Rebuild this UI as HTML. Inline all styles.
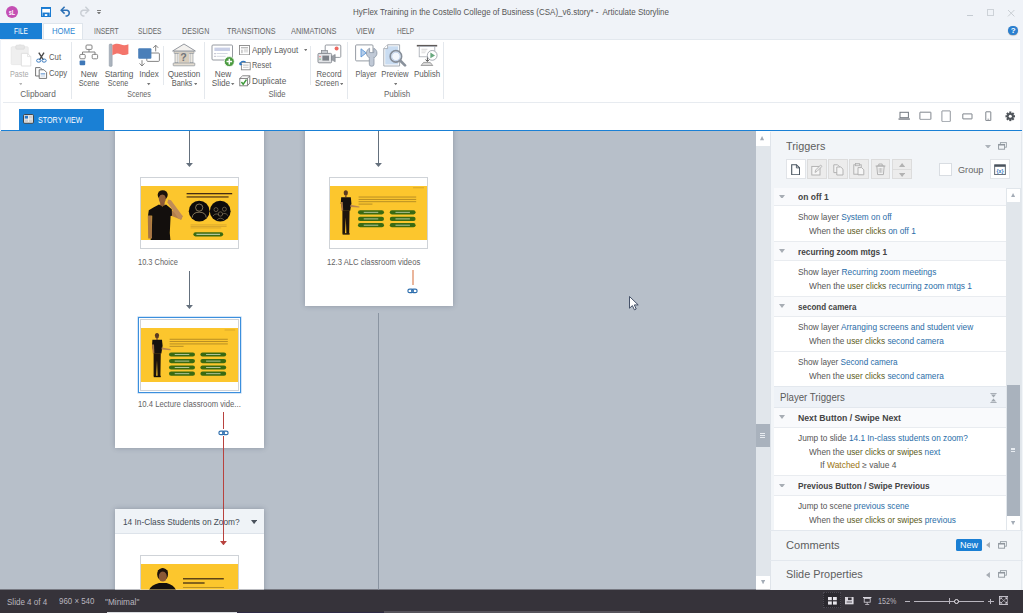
<!DOCTYPE html>
<html>
<head>
<meta charset="utf-8">
<title>Articulate Storyline</title>
<style>
*{margin:0;padding:0;box-sizing:border-box;}
html,body{width:1023px;height:613px;overflow:hidden;background:#36333a;}
body{font-family:"Liberation Sans",sans-serif;font-size:9px;color:#555;position:relative;}
.a{position:absolute;}
.t{position:absolute;white-space:nowrap;line-height:1;}
.t a{color:#2a6da8;}
.t u{text-decoration:none;color:#5b5a20;}
.t s{text-decoration:none;color:#9a7410;}
</style>
</head>
<body>
<!-- TITLE BAR + TABS -->
<div class="a" style="left:0px;top:0px;width:1023px;height:132px;background:#f0f3f8;"></div>
<div class="a" style="left:6px;top:6px;width:12px;height:12px;background:#c44fb4;border-radius:50%;"></div>
<div class="t" style="left:12.00px;top:8.50px;font-size:7.20px;color:#fff;font-weight:bold;transform:translateX(-50%) scaleX(0.7628);">sL</div>
<svg class="a" style="left:41px;top:7px" width="10.2" height="10.2" viewBox="0 0 11 11"><rect x="0.65" y="0.65" width="9.7" height="9.7" fill="#fff" stroke="#1a7bd2" stroke-width="1.3"/><rect x="0.6" y="0.3" width="9.8" height="1.8" fill="#1a7bd2"/><rect x="1.6" y="6" width="7.8" height="4.4" fill="#1a7bd2"/><rect x="4.1" y="7.7" width="2.7" height="2" fill="#fff"/></svg>
<svg class="a" style="left:59.6px;top:6.2px" width="12" height="11" viewBox="0 0 12 11"><path d="M2 4.2 H7 A3 3 0 0 1 7 10 H5.5" fill="none" stroke="#2a6fb5" stroke-width="1.5"/><path d="M4.6 0.8 L1.2 4.2 L4.6 7.6" fill="none" stroke="#2a6fb5" stroke-width="1.5"/></svg>
<svg class="a" style="left:78px;top:6px" width="12" height="11" viewBox="0 0 12 11"><path d="M10 4.2 H5 A3 3 0 0 0 5 10 H6.5" fill="none" stroke="#c9ced4" stroke-width="1.4"/><path d="M7.4 0.8 L10.8 4.2 L7.4 7.6" fill="none" stroke="#c9ced4" stroke-width="1.4"/></svg>
<div class="a" style="left:96.9px;top:10.1px;width:4.4px;height:0.9px;background:#808080;"></div>
<svg class="a" style="left:97.145px;top:11.835px" width="3.91" height="2.53"><polygon points="0,0 3.91,0 1.955,2.53" fill="#777"/></svg>
<div class="t" style="left:353.00px;top:7.80px;font-size:8.40px;color:#565656;transform:scaleX(0.9535);transform-origin:0 50%;">HyFlex Training in the Costello College of Business (CSA)_v6.story* -&nbsp; Articulate Storyline</div>
<div class="a" style="left:966.5px;top:15.2px;width:6.5px;height:1px;background:#c5cbd2;"></div>
<div class="a" style="left:987.2px;top:9.2px;width:7.2px;height:7px;background:transparent;border:1px solid #cdd2d8;border-top-width:1.6px;"></div>
<svg class="a" style="left:1007px;top:8.6px" width="8.4" height="8.4" viewBox="0 0 8.4 8.4"><path d="M1 1 L7.4 7.4 M7.4 1 L1 7.4" stroke="#c9ced4" stroke-width="1"/></svg>
<div class="a" style="left:1008.4px;top:25.6px;width:9.8px;height:9.8px;background:#2a7fd0;border-radius:50%;box-shadow:0 0.5px 1px rgba(0,0,0,0.35);"></div>
<div class="t" style="left:1013.30px;top:26.80px;font-size:8.00px;color:#fff;font-weight:bold;transform:translateX(-50%) scaleX(1.0000);">?</div>
<div class="a" style="left:0px;top:23px;width:41.5px;height:16px;background:#1a80d5;"></div>
<div class="a" style="left:43.1px;top:23.4px;width:40.4px;height:16px;background:#fff;border:1px solid #dfe5ec;border-bottom:none;"></div>
<div class="t" style="left:13.50px;top:26.70px;font-size:8.40px;color:#fff;transform:scaleX(0.7802);transform-origin:0 50%;">FILE</div>
<div class="t" style="left:51.60px;top:26.70px;font-size:8.40px;color:#2a86d2;transform:scaleX(0.9234);transform-origin:0 50%;">HOME</div>
<div class="t" style="left:94.00px;top:26.70px;font-size:8.40px;color:#666;transform:scaleX(0.8082);transform-origin:0 50%;">INSERT</div>
<div class="t" style="left:137.80px;top:26.70px;font-size:8.40px;color:#666;transform:scaleX(0.7887);transform-origin:0 50%;">SLIDES</div>
<div class="t" style="left:182.40px;top:26.70px;font-size:8.40px;color:#666;transform:scaleX(0.8498);transform-origin:0 50%;">DESIGN</div>
<div class="t" style="left:226.50px;top:26.70px;font-size:8.40px;color:#666;transform:scaleX(0.8613);transform-origin:0 50%;">TRANSITIONS</div>
<div class="t" style="left:290.50px;top:26.70px;font-size:8.40px;color:#666;transform:scaleX(0.8835);transform-origin:0 50%;">ANIMATIONS</div>
<div class="t" style="left:356.00px;top:26.70px;font-size:8.40px;color:#666;transform:scaleX(0.8642);transform-origin:0 50%;">VIEW</div>
<div class="t" style="left:397.00px;top:26.70px;font-size:8.40px;color:#666;transform:scaleX(0.7766);transform-origin:0 50%;">HELP</div>
<!-- RIBBON -->
<div class="a" style="left:1px;top:39px;width:1019.4px;height:91px;background:#fff;border-top:1px solid #e3e8ee;"></div>
<div class="a" style="left:3px;top:102px;width:1017px;height:1px;background:#e7ebf0;"></div>
<div class="a" style="left:70.6px;top:42px;width:1px;height:57px;background:#e4e8ed;"></div>
<div class="a" style="left:203.8px;top:42px;width:1px;height:57px;background:#e4e8ed;"></div>
<div class="a" style="left:347.3px;top:42px;width:1px;height:57px;background:#e4e8ed;"></div>
<div class="a" style="left:443.2px;top:42px;width:1px;height:57px;background:#e4e8ed;"></div>
<div class="a" style="left:163.4px;top:45.5px;width:1px;height:39.5px;background:#e4e8ed;"></div>
<div class="a" style="left:310px;top:45.5px;width:1px;height:39.5px;background:#e4e8ed;"></div>
<svg class="a" style="left:10px;top:44px" width="22" height="23" viewBox="0 0 22 23"><rect x="1.2" y="2.8" width="17" height="17.8" rx="1" fill="#efefef" stroke="#e6e6e6" stroke-width="0.8"/><rect x="5.8" y="1.2" width="8.6" height="4" rx="1" fill="#e6e6e6" stroke="#dadada" stroke-width="0.7"/><rect x="8.6" y="0.4" width="3" height="1.6" rx="0.8" fill="#e2e2e2"/><path d="M11.4 9.4 H17.6 L20.8 12.6 V22 H11.4 Z" fill="#fff" stroke="#dedede" stroke-width="0.9"/><path d="M17.6 9.4 V12.6 H20.8" fill="none" stroke="#dedede" stroke-width="0.8"/></svg>
<div class="t" style="left:10.10px;top:69.50px;font-size:8.60px;color:#a9a9a9;transform:scaleX(0.8415);transform-origin:0 50%;">Paste</div>
<svg class="a" style="left:18.56px;top:83.45px" width="3.68" height="2.3"><polygon points="0,0 3.68,0 1.84,2.3" fill="#b5b5b5"/></svg>
<svg class="a" style="left:35.8px;top:51.6px" width="11" height="11" viewBox="0 0 11 11"><path d="M2.8 0.6 L7.4 8 M8 0.6 L3.4 8" stroke="#4a4a4a" stroke-width="1.4" fill="none"/><ellipse cx="2.7" cy="8.6" rx="2.1" ry="1.6" fill="none" stroke="#3d7dc0" stroke-width="1"/><ellipse cx="8.1" cy="8.6" rx="2.1" ry="1.6" fill="none" stroke="#3d7dc0" stroke-width="1"/></svg>
<div class="t" style="left:49.20px;top:52.60px;font-size:8.60px;color:#5c5c5c;transform:scaleX(0.9047);transform-origin:0 50%;">Cut</div>
<svg class="a" style="left:35px;top:67.3px" width="12.5" height="12" viewBox="0 0 12.5 12"><path d="M0.6 0.6 H5.2 L7.6 3 V9 H0.6 Z" fill="#fff" stroke="#666" stroke-width="0.9"/><path d="M4.2 2.8 H9 L11.6 5.4 V11.4 H4.2 Z" fill="#fff" stroke="#666" stroke-width="0.9"/><rect x="5.6" y="6" width="4.6" height="1.6" fill="#8fb3dc"/><rect x="5.6" y="8.4" width="4.6" height="1.2" fill="#c9d6e6"/></svg>
<div class="t" style="left:49.20px;top:69.00px;font-size:8.60px;color:#5c5c5c;transform:scaleX(0.9022);transform-origin:0 50%;">Copy</div>
<div class="t" style="left:37.70px;top:89.50px;font-size:8.60px;color:#666;transform:translateX(-50%) scaleX(0.9648);">Clipboard</div>
<svg class="a" style="left:79.1px;top:43.5px" width="20" height="22" viewBox="0 0 20 22"><rect x="7" y="1" width="6" height="4.4" rx="1" fill="#fff" stroke="#777" stroke-width="0.9"/><path d="M10 5.4 V8 M3.5 10.4 V8 H16 V10.4" fill="none" stroke="#777" stroke-width="0.9"/><rect x="0.8" y="10.4" width="5.4" height="4.4" rx="1" fill="#fff" stroke="#777" stroke-width="0.9"/><rect x="13.2" y="10.4" width="5.4" height="4.4" rx="1" fill="#fff" stroke="#777" stroke-width="0.9"/><rect x="0.6" y="16.4" width="5.6" height="4.8" rx="1" fill="#3f78b8"/></svg>
<div class="t" style="left:88.90px;top:69.50px;font-size:8.60px;color:#5c5c5c;transform:translateX(-50%) scaleX(0.9649);">New</div>
<div class="t" style="left:89.00px;top:78.70px;font-size:8.60px;color:#5c5c5c;transform:translateX(-50%) scaleX(0.8492);">Scene</div>
<svg class="a" style="left:108px;top:43px" width="22" height="24" viewBox="0 0 22 24"><rect x="1.2" y="1" width="3" height="22.4" rx="1" fill="#aab3bd" stroke="#8d97a3" stroke-width="0.5"/><path d="M4.4 2 C8 0.2 10.5 0.6 13 1.6 S17.5 2.6 20.4 1.2 V11 C17.5 12.6 15 12.2 12.6 11.2 S8 10.4 4.4 12.2 Z" fill="#f4756b"/></svg>
<div class="t" style="left:119.00px;top:69.50px;font-size:8.60px;color:#5c5c5c;transform:translateX(-50%) scaleX(0.9654);">Starting</div>
<div class="t" style="left:118.40px;top:78.70px;font-size:8.60px;color:#5c5c5c;transform:translateX(-50%) scaleX(0.8369);">Scene</div>
<svg class="a" style="left:137px;top:44px" width="24" height="23" viewBox="0 0 24 23"><rect x="9.8" y="9" width="12.6" height="8.4" rx="1" fill="#fff" stroke="#777" stroke-width="0.9"/><rect x="1.2" y="4.2" width="13.2" height="10.6" rx="1" fill="#4a7fb9"/><path d="M18.7 7.4 V1.4 M16.2 3.8 L18.7 1.2 L21.2 3.8" fill="none" stroke="#777" stroke-width="0.9"/><path d="M5 16.2 V21.8 M2.5 19.4 L5 22 L7.5 19.4" fill="none" stroke="#777" stroke-width="0.9"/></svg>
<div class="t" style="left:149.20px;top:69.50px;font-size:8.60px;color:#5c5c5c;transform:translateX(-50%) scaleX(0.9367);">Index</div>
<svg class="a" style="left:147.475px;top:83.4075px" width="3.45" height="2.185"><polygon points="0,0 3.45,0 1.725,2.185" fill="#777"/></svg>
<svg class="a" style="left:171px;top:43px" width="26" height="24" viewBox="0 0 26 24"><path d="M13 1 L24.4 8 H1.6 Z" fill="#f3f1ee" stroke="#8a8f96" stroke-width="0.9" stroke-linejoin="round"/><rect x="3" y="8.6" width="20" height="1.6" fill="#d9d2c6" stroke="#8a8f96" stroke-width="0.5"/><rect x="4" y="10.4" width="3" height="9.4" fill="#ece8e1" stroke="#8a8f96" stroke-width="0.6"/><rect x="19" y="10.4" width="3" height="9.4" fill="#ece8e1" stroke="#8a8f96" stroke-width="0.6"/><rect x="8" y="10.4" width="10" height="9.4" fill="#d8cdbc"/><rect x="2.2" y="20" width="21.6" height="2.8" rx="0.6" fill="#e4ddd2" stroke="#8a8f96" stroke-width="0.7"/><text x="12.6" y="18.2" font-family="Liberation Sans" font-weight="bold" font-size="10.6" fill="#70747a" text-anchor="middle">?</text></svg>
<div class="t" style="left:184.00px;top:69.50px;font-size:8.60px;color:#5c5c5c;transform:translateX(-50%) scaleX(0.9504);">Question</div>
<div class="t" style="left:181.70px;top:78.70px;font-size:8.60px;color:#5c5c5c;transform:translateX(-50%) scaleX(0.8623);">Banks</div>
<svg class="a" style="left:193.775px;top:83.2075px" width="3.45" height="2.185"><polygon points="0,0 3.45,0 1.725,2.185" fill="#777"/></svg>
<div class="t" style="left:138.70px;top:89.50px;font-size:8.60px;color:#666;transform:translateX(-50%) scaleX(0.8231);">Scenes</div>
<svg class="a" style="left:210.5px;top:43.5px" width="25" height="24" viewBox="0 0 25 24"><rect x="1" y="1" width="20.5" height="15" rx="1" fill="#fff" stroke="#8a8f96" stroke-width="0.9"/><rect x="3.4" y="3.6" width="15.6" height="3.4" fill="#c9cfe6"/><rect x="3.4" y="9" width="1.2" height="1.2" fill="#aab"/><rect x="5.6" y="9" width="11" height="1" fill="#d5d9e2"/><rect x="3.4" y="11.8" width="1.2" height="1.2" fill="#aab"/><rect x="5.6" y="11.8" width="9" height="1" fill="#d5d9e2"/><circle cx="18.3" cy="17.6" r="5" fill="#4a9a3f" stroke="#fff" stroke-width="0.8"/><path d="M18.3 14.8 V20.4 M15.5 17.6 H21.1" stroke="#fff" stroke-width="1.5"/></svg>
<div class="t" style="left:222.90px;top:69.50px;font-size:8.60px;color:#5c5c5c;transform:translateX(-50%) scaleX(0.9649);">New</div>
<div class="t" style="left:220.90px;top:78.70px;font-size:8.60px;color:#5c5c5c;transform:translateX(-50%) scaleX(0.9576);">Slide</div>
<svg class="a" style="left:231.075px;top:83.2075px" width="3.45" height="2.185"><polygon points="0,0 3.45,0 1.725,2.185" fill="#777"/></svg>
<svg class="a" style="left:239px;top:44.5px" width="11" height="10.5" viewBox="0 0 11 10.5"><rect x="0.5" y="0.5" width="10" height="9.4" fill="#fff" stroke="#888" stroke-width="0.9"/><rect x="2" y="2" width="7" height="1.4" fill="#bbb"/><rect x="2" y="4.6" width="1.8" height="3.6" fill="#ccc"/><rect x="4.8" y="4.6" width="4.2" height="0.9" fill="#bbb"/><rect x="4.8" y="6.4" width="4.2" height="0.9" fill="#ccc"/></svg>
<div class="t" style="left:252.30px;top:45.80px;font-size:8.60px;color:#5c5c5c;transform:scaleX(0.9298);transform-origin:0 50%;">Apply Layout</div>
<svg class="a" style="left:303.675px;top:48.7075px" width="3.45" height="2.185"><polygon points="0,0 3.45,0 1.725,2.185" fill="#777"/></svg>
<svg class="a" style="left:238.5px;top:60px" width="12" height="10.5" viewBox="0 0 12 10.5"><rect x="2.4" y="2.6" width="8.8" height="7.2" fill="#fff" stroke="#888" stroke-width="0.9"/><rect x="4" y="4.6" width="5.6" height="1" fill="#bbb"/><rect x="4" y="6.8" width="5.6" height="1" fill="#ccc"/><path d="M1 4.8 A3.4 3.4 0 0 1 6.6 2.2" fill="none" stroke="#2f78c2" stroke-width="1.3"/><path d="M0 2.6 L1 5.6 L3.6 4.4 Z" fill="#2f78c2"/></svg>
<div class="t" style="left:252.30px;top:60.90px;font-size:8.60px;color:#5c5c5c;transform:scaleX(0.8596);transform-origin:0 50%;">Reset</div>
<svg class="a" style="left:238.5px;top:75px" width="12" height="11.5" viewBox="0 0 12 11.5"><path d="M3.6 0.8 H10.8 V8 L8.6 10.6" fill="#fff" stroke="#777" stroke-width="0.9"/><rect x="0.8" y="3.4" width="7.6" height="7.4" fill="#fff" stroke="#777" stroke-width="0.9"/><path d="M0.8 3.4 L3.6 0.8 M8.4 3.4 L10.8 0.8" stroke="#777" stroke-width="0.8"/><path d="M2.4 7 L4.2 9.2 L7.4 4.6" fill="none" stroke="#3d9a3a" stroke-width="1.5"/></svg>
<div class="t" style="left:252.30px;top:76.60px;font-size:8.60px;color:#5c5c5c;transform:scaleX(0.9546);transform-origin:0 50%;">Duplicate</div>
<svg class="a" style="left:317px;top:44px" width="25" height="21" viewBox="0 0 25 21"><rect x="8.2" y="1" width="15.6" height="12.4" rx="1" fill="#fff" stroke="#8a8f96" stroke-width="0.9"/><circle cx="19.6" cy="4.6" r="2" fill="#ee6a62"/><rect x="1" y="9.4" width="13.6" height="9.4" rx="1" fill="#e1e3e6" stroke="#80858c" stroke-width="0.9"/><rect x="4.4" y="6.6" width="6" height="3" fill="#c5c9ce" stroke="#80858c" stroke-width="0.7"/><rect x="5.4" y="11.6" width="6.6" height="5" fill="#7c8188"/><rect x="2.4" y="12" width="1.2" height="1.2" fill="#e66"/><rect x="2.4" y="14.6" width="1.2" height="1.2" fill="#6a6"/><path d="M14.6 12.4 L18.2 10.4 V17.8 L14.6 15.8 Z" fill="#9a9fa6" stroke="#80858c" stroke-width="0.6"/></svg>
<div class="t" style="left:329.30px;top:69.50px;font-size:8.60px;color:#5c5c5c;transform:translateX(-50%) scaleX(0.9060);">Record</div>
<div class="t" style="left:327.40px;top:78.70px;font-size:8.60px;color:#5c5c5c;transform:translateX(-50%) scaleX(0.8776);">Screen</div>
<svg class="a" style="left:339.975px;top:83.2075px" width="3.45" height="2.185"><polygon points="0,0 3.45,0 1.725,2.185" fill="#777"/></svg>
<div class="t" style="left:277.40px;top:89.50px;font-size:8.60px;color:#666;transform:translateX(-50%) scaleX(0.9001);">Slide</div>
<svg class="a" style="left:355px;top:43.5px" width="23" height="23" viewBox="0 0 23 23"><rect x="0.6" y="0.9" width="17.4" height="16" rx="1" fill="#fff" stroke="#8a919a" stroke-width="0.9"/><path d="M6 4.8 L11.2 8.9 L6 13 Z" fill="#b4cdea" stroke="#5b95d6" stroke-width="0.9" stroke-linejoin="round"/><path d="M14.6 4.2 A5.3 5.3 0 1 0 18.8 4.2 V8.6 H14.6 Z" fill="#c0c9d6" stroke="#8a95a5" stroke-width="0.8"/><rect x="14.3" y="12.6" width="4.7" height="9.6" rx="2" fill="#c0c9d6" stroke="#8a95a5" stroke-width="0.8"/><rect x="14.8" y="11.8" width="3.7" height="3" fill="#c0c9d6"/></svg>
<div class="t" style="left:366.30px;top:69.50px;font-size:8.60px;color:#5c5c5c;transform:translateX(-50%) scaleX(0.8580);">Player</div>
<svg class="a" style="left:383px;top:43.5px" width="24" height="23" viewBox="0 0 24 23"><path d="M4.6 0.8 H16.6 V22 H0.8 V4.6 Z" fill="#fff" stroke="#9aa1aa" stroke-width="0.9"/><path d="M5.4 2.2 H15.2 V20.6 H2.2 V5.6 Z" fill="#c9dcf1"/><path d="M0.8 4.6 H4.6 V0.8" fill="#fff" stroke="#9aa1aa" stroke-width="0.8"/><circle cx="12.9" cy="12.4" r="5.7" fill="#f3f7fc" stroke="#868e99" stroke-width="1.7"/><circle cx="12.9" cy="12.4" r="4.2" fill="none" stroke="#a9c1e2" stroke-width="0.7"/><path d="M17.4 16.8 L22 21.4" stroke="#8a929c" stroke-width="2.7" stroke-linecap="round"/></svg>
<div class="t" style="left:395.30px;top:69.50px;font-size:8.60px;color:#5c5c5c;transform:translateX(-50%) scaleX(0.8928);">Preview</div>
<svg class="a" style="left:393.575px;top:83.4075px" width="3.45" height="2.185"><polygon points="0,0 3.45,0 1.725,2.185" fill="#777"/></svg>
<svg class="a" style="left:416px;top:44px" width="22" height="22.4" viewBox="0 0 22 22.4"><rect x="0.8" y="0.9" width="20.4" height="1.6" fill="#5e5957"/><rect x="3.2" y="2.6" width="15.6" height="10.2" fill="#fff" stroke="#a4aab2" stroke-width="0.8"/><rect x="5.4" y="4.8" width="6" height="0.8" fill="#ccc"/><rect x="5.4" y="6.6" width="5" height="0.8" fill="#d5d5d5"/><rect x="5.4" y="8.4" width="4" height="0.8" fill="#d5d5d5"/><circle cx="16.2" cy="11.4" r="4.9" fill="#fff" stroke="#a0a6ae" stroke-width="0.9"/><path d="M14.4 8.6 L19 11.4 L14.4 14.2 Z" fill="#68a87e"/><path d="M11.4 13.4 V17 M9.6 15.6 L11.4 17.6 L13.2 15.6" fill="none" stroke="#555" stroke-width="1"/><path d="M5 21.6 L7.6 18.4 H14.2 L16.8 21.6 Z" fill="#d8d8d8" stroke="#8c8c8c" stroke-width="0.8"/></svg>
<div class="t" style="left:426.90px;top:69.50px;font-size:8.60px;color:#5c5c5c;transform:translateX(-50%) scaleX(0.9295);">Publish</div>
<div class="t" style="left:397.10px;top:89.50px;font-size:8.60px;color:#666;transform:translateX(-50%) scaleX(0.9295);">Publish</div>
<div class="a" style="left:19px;top:109.4px;width:85px;height:21px;background:#1a80d5;"></div>
<svg class="a" style="left:22.9px;top:114.1px" width="11" height="10" viewBox="0 0 11 10"><rect x="0.6" y="0.6" width="9.8" height="8.6" rx="0.8" fill="#f4f4f4" stroke="#3a3a3a" stroke-width="1"/><rect x="1.8" y="1.8" width="3.2" height="2.8" fill="#2a78c8"/><rect x="5.8" y="1.8" width="3.6" height="2.8" fill="#cfcfcf"/><rect x="1.8" y="5.4" width="3.2" height="2.8" fill="#cfcfcf"/><rect x="5.8" y="5.4" width="3.6" height="2.8" fill="#cfcfcf"/></svg>
<div class="t" style="left:37.80px;top:115.80px;font-size:8.40px;color:#fff;transform:scaleX(0.8554);transform-origin:0 50%;">STORY VIEW</div>
<svg class="a" style="left:897.5px;top:111px" width="13" height="10" viewBox="0 0 13 10"><rect x="2" y="1.3" width="8.4" height="5.4" fill="#fff" stroke="#727880" stroke-width="1"/><rect x="0.5" y="7.4" width="11.4" height="1.3" fill="#727880"/></svg>
<svg class="a" style="left:918.5px;top:111px" width="13" height="10" viewBox="0 0 13 10"><rect x="0.9" y="1.2" width="11" height="7.2" rx="0.3" fill="#fff" stroke="#727880" stroke-width="0.9"/><rect x="1.2" y="8.4" width="11" height="0.5" fill="#c5c9ce"/></svg>
<svg class="a" style="left:940.8px;top:109.5px" width="10.4" height="13" viewBox="0 0 10.4 13"><rect x="0.9" y="0.9" width="8.4" height="10.6" rx="0.3" fill="#fff" stroke="#868c93" stroke-width="0.9"/><rect x="1.4" y="11.5" width="8" height="0.5" fill="#c5c9ce"/></svg>
<svg class="a" style="left:961.6px;top:112.6px" width="11" height="7" viewBox="0 0 11 7"><rect x="0.8" y="0.9" width="9.2" height="5" rx="0.2" fill="#fff" stroke="#727880" stroke-width="0.9"/></svg>
<svg class="a" style="left:985px;top:110.8px" width="7" height="10.6" viewBox="0 0 7 10.6"><rect x="0.8" y="0.8" width="5" height="8.8" rx="0.3" fill="#fff" stroke="#727880" stroke-width="0.9"/><rect x="2.4" y="7.8" width="1.8" height="0.7" fill="#727880"/></svg>
<svg class="a" style="left:1004.8px;top:111px" width="10.6" height="10.6" viewBox="0 0 11 11"><g transform="translate(5.5 5.5)"><g fill="#50555b"><rect x="-1.1" y="-5" width="2.2" height="10"/><rect x="-1.1" y="-5" width="2.2" height="10" transform="rotate(45)"/><rect x="-1.1" y="-5" width="2.2" height="10" transform="rotate(90)"/><rect x="-1.1" y="-5" width="2.2" height="10" transform="rotate(135)"/><circle r="3.5"/></g><circle r="1.6" fill="#fff"/></g></svg>
<div class="a" style="left:0;top:0;width:1023px;height:613px;clip-path:inset(131px 253px 23.4px 0);">
<!-- CANVAS -->
<div class="a" style="left:0px;top:131px;width:756px;height:459px;background:#b7bfc9;"></div>
<div class="a" style="left:115px;top:120px;width:149px;height:327.5px;background:#fff;box-shadow:0 0 5px rgba(60,70,90,0.33);"></div>
<div class="a" style="left:188.8px;top:131px;width:1px;height:32px;background:#64707d;"></div>
<svg class="a" style="left:185.85px;top:163.388px" width="6.9" height="4.025"><polygon points="0,0 6.9,0 3.45,4.025" fill="#64707d"/></svg>
<div class="a" style="left:140px;top:177.2px;width:99px;height:72px;background:#fff;border:1px solid #cfd3d8;"></div>
<svg class="a" style="left:140.9px;top:186px" width="97.2" height="54" viewBox="0 0 97.2 54"><rect width="97.2" height="54" fill="#fcc62d"/><ellipse cx="21.7" cy="9" rx="5" ry="4.8" fill="#1a110b"/><ellipse cx="21.3" cy="12.8" rx="3.5" ry="4.8" fill="#8f5d3a"/><path d="M17.6 10.6 Q21.4 6.4 25.4 10.8 L26.4 8 Q21.6 2.6 16.8 8 Z" fill="#1a110b"/><rect x="19.2" y="16.6" width="4.4" height="3.4" fill="#8a5836"/><path d="M30.2 24 L41.6 30 L40.2 33.8 L30.2 29.8 Z" fill="#b27e4b"/><path d="M41.8 30.2 L40 33.8 L37.4 32.6 L26.4 16.4 L27.2 13.6 L30 14.2 Z" fill="#c08c58"/><path d="M18 18.6 L21.4 20.4 L25 18.6 L30.8 23.2 L31 29.8 L29.6 30 L28.8 47 L29.4 54 L9.6 54 L11 40 L11.2 29.8 L7 29.8 L7.8 24.2 L12.4 21.6 Z" fill="#130f0d"/><path d="M6.8 29.8 L10.8 29.8 L11 52.6 L7.2 52.6 Z" fill="#a87644"/><rect x="45.6" y="7" width="45.6" height="1.3" fill="#3a2414" opacity="0.95"/><rect x="45.6" y="10.3" width="42" height="1.3" fill="#3a2414" opacity="0.85"/><circle cx="58.2" cy="25.2" r="10.4" fill="#0d0b0b"/><circle cx="79.2" cy="25.2" r="10.4" fill="#0d0b0b"/><circle cx="58.2" cy="21.6" r="3.6" fill="none" stroke="#cdb98a" stroke-width="0.6"/><path d="M51.2 31.6 Q51.6 26.2 58.2 26.2 T65.2 31.6" fill="none" stroke="#cdb98a" stroke-width="0.6"/><circle cx="75" cy="23.6" r="2" fill="none" stroke="#a99a78" stroke-width="0.5"/><circle cx="83.4" cy="23.2" r="2" fill="none" stroke="#a99a78" stroke-width="0.5"/><circle cx="79.4" cy="28" r="2.2" fill="none" stroke="#a99a78" stroke-width="0.5"/><path d="M72 30 Q75 26.4 78 29 M81 28.6 Q84 25.8 87 29.6 M75.6 34.4 Q79.4 30 83.4 34.4" fill="none" stroke="#a99a78" stroke-width="0.5"/><rect x="49.6" y="38.6" width="36" height="0.7" fill="#b98c2c" opacity="0.7"/><rect x="49.6" y="40.1" width="36" height="0.7" fill="#b98c2c" opacity="0.7"/><rect x="49.6" y="41.6" width="30.6" height="0.7" fill="#b98c2c" opacity="0.7"/><rect x="52.4" y="46.2" width="29.8" height="4.2" rx="2.1" fill="#3a6a12"/><rect x="55.4" y="47.8" width="23.6" height="1" fill="#eaf1dc" opacity="0.85"/></svg>
<div class="t" style="left:137.60px;top:257.95px;font-size:8.30px;color:#636363;transform:scaleX(0.8988);transform-origin:0 50%;">10.3 Choice</div>
<div class="a" style="left:188.8px;top:270.5px;width:1px;height:34.5px;background:#64707d;"></div>
<svg class="a" style="left:185.85px;top:305.387px" width="6.9" height="4.025"><polygon points="0,0 6.9,0 3.45,4.025" fill="#64707d"/></svg>
<div class="a" style="left:137.8px;top:316.6px;width:103.4px;height:76.8px;background:#fff;border:1.2px solid #3b8fdd;box-shadow:0 0 0 0.6px #b9d6f2;"></div>
<div class="a" style="left:140px;top:319.2px;width:99px;height:72px;background:#fff;border:1px solid #cfd3d8;"></div>
<svg class="a" style="left:140.9px;top:328px" width="97.2" height="54" viewBox="0 0 97.2 54"><rect width="97.2" height="54" fill="#fcc62d"/><ellipse cx="16" cy="7.6" rx="2.1" ry="2.7" fill="#5a3a22"/><rect x="15.2" y="9.8" width="1.6" height="2" fill="#8a5a34"/><path d="M11.4 11.8 h9.6 l0.6 6 l-1.2 7.6 h-7.6 l-1.8 -7.6 Z" fill="#15110f"/><path d="M20.6 19.4 l9 1.6 l0 1.2 l-9 -0.6 Z" fill="#b9854f"/><path d="M11 16.6 l0.8 9 l1.6 0 l-0.4 -9 Z" fill="#a87442"/><path d="M12.6 25.2 h7.2 l-0.4 23 h-2.8 l-0.6 -16 l-0.8 16 h-2.6 Z" fill="#1d140c"/><rect x="12.8" y="47.8" width="7" height="1.4" fill="#120d0a"/><rect x="28.6" y="10.8" width="58.2" height="0.85" fill="#8c6a1e" opacity="0.7"/><rect x="28.6" y="13.15" width="58.2" height="0.85" fill="#8c6a1e" opacity="0.7"/><rect x="28.6" y="15.5" width="58.2" height="0.85" fill="#8c6a1e" opacity="0.7"/><rect x="28.6" y="17.85" width="13.968" height="0.85" fill="#8c6a1e" opacity="0.7"/><rect x="83.6" y="1.6" width="10.6" height="0.8" fill="#c79a2a" opacity="0.8"/><rect x="28" y="24.4" width="26" height="4.2" rx="2.1" fill="#3a6a12"/><rect x="33.72" y="26.05" width="14.56" height="0.9" fill="#e8efd8" opacity="0.75"/><rect x="59.4" y="24.4" width="25.8" height="4.2" rx="2.1" fill="#3a6a12"/><rect x="65.076" y="26.05" width="14.448" height="0.9" fill="#e8efd8" opacity="0.75"/><rect x="28" y="31" width="26" height="4.2" rx="2.1" fill="#3a6a12"/><rect x="33.72" y="32.65" width="14.56" height="0.9" fill="#e8efd8" opacity="0.75"/><rect x="59.4" y="31" width="25.8" height="4.2" rx="2.1" fill="#3a6a12"/><rect x="65.076" y="32.65" width="14.448" height="0.9" fill="#e8efd8" opacity="0.75"/><rect x="28" y="37.4" width="26" height="4.2" rx="2.1" fill="#3a6a12"/><rect x="33.72" y="39.05" width="14.56" height="0.9" fill="#e8efd8" opacity="0.75"/><rect x="59.4" y="37.4" width="25.8" height="4.2" rx="2.1" fill="#3a6a12"/><rect x="65.076" y="39.05" width="14.448" height="0.9" fill="#e8efd8" opacity="0.75"/><rect x="28" y="43.6" width="26" height="4.2" rx="2.1" fill="#3a6a12"/><rect x="33.72" y="45.25" width="14.56" height="0.9" fill="#e8efd8" opacity="0.75"/><rect x="59.4" y="43.6" width="25.8" height="4.2" rx="2.1" fill="#3a6a12"/><rect x="65.076" y="45.25" width="14.448" height="0.9" fill="#e8efd8" opacity="0.75"/></svg>
<div class="t" style="left:137.60px;top:399.95px;font-size:8.30px;color:#636363;transform:scaleX(0.9287);transform-origin:0 50%;">10.4 Lecture classroom vide...</div>
<div class="a" style="left:223.1px;top:412.4px;width:1px;height:17px;background:#b8423e;"></div>
<div class="a" style="left:305px;top:120px;width:148.3px;height:186px;background:#fff;box-shadow:0 0 5px rgba(60,70,90,0.33);"></div>
<div class="a" style="left:378.4px;top:131px;width:1px;height:32px;background:#64707d;"></div>
<svg class="a" style="left:375.45px;top:163.388px" width="6.9" height="4.025"><polygon points="0,0 6.9,0 3.45,4.025" fill="#64707d"/></svg>
<div class="a" style="left:329.2px;top:177.2px;width:99px;height:72px;background:#fff;border:1px solid #cfd3d8;"></div>
<svg class="a" style="left:330.1px;top:186px" width="97.2" height="54" viewBox="0 0 97.2 54"><rect width="97.2" height="54" fill="#fcc62d"/><ellipse cx="15.8" cy="7" rx="2.1" ry="2.7" fill="#5a3a22"/><rect x="15" y="9.2" width="1.6" height="2" fill="#8a5a34"/><path d="M11.2 11.2 h9.6 l0.6 6 l-1.2 7.6 h-7.6 l-1.8 -7.6 Z" fill="#15110f"/><path d="M20.4 18.8 l9 1.6 l0 1.2 l-9 -0.6 Z" fill="#b9854f"/><path d="M10.8 16 l0.8 9 l1.6 0 l-0.4 -9 Z" fill="#a87442"/><path d="M12.4 24.6 h7.2 l-0.4 23 h-2.8 l-0.6 -16 l-0.8 16 h-2.6 Z" fill="#1d140c"/><rect x="12.6" y="47.2" width="7" height="1.4" fill="#120d0a"/><rect x="28.6" y="10.6" width="57.6" height="0.85" fill="#8c6a1e" opacity="0.7"/><rect x="28.6" y="12.95" width="57.6" height="0.85" fill="#8c6a1e" opacity="0.7"/><rect x="28.6" y="15.3" width="57.6" height="0.85" fill="#8c6a1e" opacity="0.7"/><rect x="28.6" y="17.65" width="13.824" height="0.85" fill="#8c6a1e" opacity="0.7"/><rect x="83" y="1.4" width="11" height="0.8" fill="#c79a2a" opacity="0.8"/><rect x="28" y="24.2" width="26" height="4.2" rx="2.1" fill="#3a6a12"/><rect x="33.72" y="25.85" width="14.56" height="0.9" fill="#e8efd8" opacity="0.75"/><rect x="59.8" y="24.2" width="25.8" height="4.2" rx="2.1" fill="#3a6a12"/><rect x="65.476" y="25.85" width="14.448" height="0.9" fill="#e8efd8" opacity="0.75"/><rect x="28" y="30.8" width="26" height="4.2" rx="2.1" fill="#3a6a12"/><rect x="33.72" y="32.45" width="14.56" height="0.9" fill="#e8efd8" opacity="0.75"/><rect x="59.8" y="30.8" width="25.8" height="4.2" rx="2.1" fill="#3a6a12"/><rect x="65.476" y="32.45" width="14.448" height="0.9" fill="#e8efd8" opacity="0.75"/><rect x="28" y="37.1" width="26" height="4.2" rx="2.1" fill="#3a6a12"/><rect x="33.72" y="38.75" width="14.56" height="0.9" fill="#e8efd8" opacity="0.75"/><rect x="59.8" y="37.1" width="25.8" height="4.2" rx="2.1" fill="#3a6a12"/><rect x="65.476" y="38.75" width="14.448" height="0.9" fill="#e8efd8" opacity="0.75"/></svg>
<div class="t" style="left:326.70px;top:257.95px;font-size:8.30px;color:#636363;transform:scaleX(0.9279);transform-origin:0 50%;">12.3 ALC classroom videos</div>
<div class="a" style="left:412.1px;top:270.4px;width:1.7px;height:14.8px;background:#eab59b;"></div>
<svg class="a" style="left:407.3px;top:287.7px" width="11" height="6" viewBox="0 0 11 6"><rect x="0.9" y="1.1" width="5.4" height="3.6" rx="1.8" fill="none" stroke="#2f6fae" stroke-width="1.2"/><rect x="4.7" y="1.1" width="5.4" height="3.6" rx="1.8" fill="none" stroke="#2f6fae" stroke-width="1.2"/><rect x="4" y="2.4" width="3" height="1" fill="#2f6fae"/></svg>
<svg class="a" style="left:218.2px;top:429.6px" width="11" height="6" viewBox="0 0 11 6"><rect x="0.9" y="1.1" width="5.4" height="3.6" rx="1.8" fill="none" stroke="#2f6fae" stroke-width="1.2"/><rect x="4.7" y="1.1" width="5.4" height="3.6" rx="1.8" fill="none" stroke="#2f6fae" stroke-width="1.2"/><rect x="4" y="2.4" width="3" height="1" fill="#2f6fae"/></svg>
<div class="a" style="left:378.4px;top:313px;width:1px;height:277px;background:#8a94a1;"></div>
<div class="a" style="left:223.1px;top:436px;width:1px;height:106px;background:#b8423e;"></div>
<div class="a" style="left:115px;top:509.3px;width:149px;height:90px;background:#fff;box-shadow:0 0 5px rgba(60,70,90,0.33);"></div>
<div class="a" style="left:115px;top:509.3px;width:149px;height:24px;background:#eff3f7;"></div>
<div class="a" style="left:115px;top:533px;width:149px;height:1px;background:#dde3ea;"></div>
<div class="t" style="left:123.40px;top:517.00px;font-size:9.60px;color:#434b55;transform:scaleX(0.8642);transform-origin:0 50%;">14 In-Class Students on Zoom?</div>
<svg class="a" style="left:251.295px;top:520.23px" width="6.21" height="4.14"><polygon points="0,0 6.21,0 3.105,4.14" fill="#4a525c"/></svg>
<div class="a" style="left:223.1px;top:509px;width:1px;height:33px;background:#b8423e;"></div>
<svg class="a" style="left:220.25px;top:541.015px" width="6.9" height="4.37"><polygon points="0,0 6.9,0 3.45,4.37" fill="#b8423e"/></svg>
<div class="a" style="left:140px;top:555.4px;width:99px;height:72px;background:#fff;border:1px solid #cfd3d8;"></div>
<svg class="a" style="left:140.9px;top:564.2px" width="97.2" height="54" viewBox="0 0 97.2 54"><rect width="97.2" height="54" fill="#fcc62d"/><ellipse cx="21.6" cy="10.6" rx="5.4" ry="6" fill="#1c120c"/><ellipse cx="21.8" cy="12.6" rx="4" ry="5" fill="#8a5836"/><path d="M16.6 10 Q21.6 4 26.8 10 L26.6 6.6 Q21.6 1.6 16.8 6.6 Z" fill="#1c120c"/><path d="M8 26 Q10 21 18 19 L25.6 19 Q33 21 35 26 Z" fill="#130f0d"/><rect x="42" y="14.2" width="40.8" height="1.2" fill="#2a1a10" opacity="0.95"/><rect x="42" y="18.4" width="21.6" height="1.2" fill="#2a1a10" opacity="0.95"/><rect x="42" y="23.2" width="41" height="0.8" fill="#8c6a1e" opacity="0.7"/></svg>
<svg class="a" style="left:628px;top:295px" width="12" height="16" viewBox="0 0 12 16"><path d="M1.5 1.5 V13.2 L4.4 10.6 L6.4 14.8 L8.2 14 L6.3 9.9 H10.2 Z" fill="#fff" stroke="#34425a" stroke-width="0.9" stroke-linejoin="round"/></svg>
<div class="a" style="left:755.5px;top:131px;width:15.3px;height:459px;background:#e1e6eb;"></div>
<div class="a" style="left:755.5px;top:131.4px;width:14px;height:14.2px;background:#fff;"></div>
<div class="a" style="left:755.5px;top:576.2px;width:14px;height:13.6px;background:#fff;"></div>
<div class="a" style="left:755.5px;top:424px;width:14px;height:22.5px;background:#a9b2bd;"></div>
<div class="a" style="left:760.2px;top:433px;width:4.6px;height:0.9px;background:#e8ecf1;"></div>
<div class="a" style="left:760.2px;top:434.8px;width:4.6px;height:0.9px;background:#e8ecf1;"></div>
<div class="a" style="left:760.2px;top:436.6px;width:4.6px;height:0.9px;background:#e8ecf1;"></div>
<svg class="a" style="left:760.33px;top:136.415px" width="4.14" height="4.37"><polygon points="0,4.37 4.14,4.37 2.07,0" fill="#a4acb6"/></svg>
<svg class="a" style="left:760.53px;top:579.815px" width="4.14" height="4.37"><polygon points="0,0 4.14,0 2.07,4.37" fill="#a4acb6"/></svg>
</div>
<!-- RIGHT PANEL -->
<div class="a" style="left:770px;top:131px;width:253px;height:459px;background:#f2f5f8;"></div>
<div class="a" style="left:769.6px;top:132px;width:1.2px;height:458px;background:#dfe4ea;"></div>
<div class="a" style="left:1020.6px;top:132px;width:1px;height:458px;background:#e3e8ed;"></div>
<div class="t" style="left:785.60px;top:140.80px;font-size:11.00px;color:#5e5e5e;transform:scaleX(0.9865);transform-origin:0 50%;">Triggers</div>
<svg class="a" style="left:985.21px;top:144.56px" width="5.98" height="3.68"><polygon points="0,0 5.98,0 2.99,3.68" fill="#adb3ba"/></svg>
<svg class="a" style="left:998px;top:141.8px" width="9" height="8" viewBox="0 0 9 8"><rect x="2.4" y="0.6" width="6" height="4.6" fill="none" stroke="#9aa1a9" stroke-width="0.9"/><rect x="0.6" y="2.4" width="6" height="4.8" fill="#f2f5f8" stroke="#8d949c" stroke-width="0.9"/><rect x="0.6" y="2.2" width="6" height="1.3" fill="#8d949c"/></svg>
<div class="a" style="left:785.7px;top:159.3px;width:19.9px;height:20.2px;background:#fff;border:1px solid #e1e4e8;"></div>
<div class="a" style="left:806.9px;top:159.3px;width:19.9px;height:20.2px;background:#ececec;border:1px solid #dcdcdc;"></div>
<div class="a" style="left:828.1px;top:159.3px;width:19.9px;height:20.2px;background:#ececec;border:1px solid #dcdcdc;"></div>
<div class="a" style="left:849.3px;top:159.3px;width:19.9px;height:20.2px;background:#ececec;border:1px solid #dcdcdc;"></div>
<div class="a" style="left:870.5px;top:159.3px;width:19.9px;height:20.2px;background:#ececec;border:1px solid #dcdcdc;"></div>
<div class="a" style="left:891.7px;top:159.3px;width:19.9px;height:20.2px;background:#ececec;border:1px solid #dcdcdc;"></div>
<svg class="a" style="left:791px;top:163.6px" width="9.4" height="11.6" viewBox="0 0 9.4 11.6"><path d="M0.7 0.7 H5.4 L8.6 3.9 V10.8 H0.7 Z" fill="#fff" stroke="#4a5661" stroke-width="1.1"/><path d="M5.4 0.7 V3.9 H8.6" fill="none" stroke="#4a5661" stroke-width="0.9"/></svg>
<svg class="a" style="left:811.2px;top:163.6px" width="12" height="12" viewBox="0 0 12 12"><rect x="0.8" y="2.4" width="8.2" height="8.6" fill="#f6f6f6" stroke="#adadad" stroke-width="0.9"/><path d="M4 8.4 L4.6 6 L9.6 1 L11 2.4 L6 7.4 Z" fill="#e9e9e9" stroke="#adadad" stroke-width="0.8"/></svg>
<svg class="a" style="left:832.8px;top:163.8px" width="11" height="12" viewBox="0 0 11 12"><path d="M0.8 0.8 H4.6 L6.6 2.8 V8.6 H0.8 Z" fill="#f4f4f4" stroke="#adadad" stroke-width="0.9"/><path d="M3.8 3 H7.8 L10 5.2 V11 H3.8 Z" fill="#f4f4f4" stroke="#adadad" stroke-width="0.9"/></svg>
<svg class="a" style="left:853.4px;top:163.3px" width="12" height="12.5" viewBox="0 0 12 12.5"><rect x="0.8" y="1.8" width="7.4" height="9.4" fill="#f0f0f0" stroke="#adadad" stroke-width="0.9"/><rect x="2.6" y="0.6" width="3.8" height="2.2" fill="#ddd" stroke="#adadad" stroke-width="0.7"/><path d="M5 4.6 H8.6 L10.8 6.8 V11.8 H5 Z" fill="#f6f6f6" stroke="#adadad" stroke-width="0.9"/></svg>
<svg class="a" style="left:874.9px;top:163.2px" width="11" height="12.5" viewBox="0 0 11 12.5"><path d="M1.8 3 H9.2 L8.4 11.6 H2.6 Z" fill="#f1f1f1" stroke="#adadad" stroke-width="0.9"/><path d="M0.6 3 H10.4 M3.8 2.8 V1 H7.2 V2.8" fill="none" stroke="#adadad" stroke-width="0.9"/><path d="M4.2 5 V9.8 M5.5 5 V9.8 M6.8 5 V9.8" stroke="#adadad" stroke-width="0.6"/></svg>
<div class="a" style="left:892.7px;top:169.2px;width:17.9px;height:1px;background:#dcdcdc;"></div>
<svg class="a" style="left:898.595px;top:163.045px" width="6.21" height="3.91"><polygon points="0,3.91 6.21,3.91 3.105,0" fill="#b2b2b2"/></svg>
<svg class="a" style="left:898.595px;top:172.845px" width="6.21" height="3.91"><polygon points="0,0 6.21,0 3.105,3.91" fill="#b2b2b2"/></svg>
<div class="a" style="left:939.1px;top:163.1px;width:12.8px;height:12.8px;background:#fff;border:1px solid #d9dde2;"></div>
<div class="t" style="left:958.00px;top:165.30px;font-size:9.40px;color:#666;transform:scaleX(0.9746);transform-origin:0 50%;">Group</div>
<div class="a" style="left:990.2px;top:159.3px;width:19.6px;height:20.2px;background:#fff;border:1px solid #e1e4e8;"></div>
<svg class="a" style="left:993.8px;top:163.6px" width="12" height="11.4" viewBox="0 0 12.8 11.8"><rect x="0.7" y="0.7" width="11.4" height="10.4" fill="#fff" stroke="#59626c" stroke-width="1"/><rect x="0.7" y="0.6" width="11.4" height="2.2" fill="#4a535d"/><text x="6.4" y="9.2" font-family="Liberation Sans" font-size="5.6" font-weight="bold" fill="#3477bd" text-anchor="middle">{x}</text></svg>
<div class="a" style="left:773.6px;top:188px;width:232.4px;height:342px;background:#fff;"></div>
<div class="a" style="left:773.6px;top:188px;width:232.4px;height:17.4px;background:#f9fafc;"></div>
<div class="a" style="left:773.6px;top:205.4px;width:232.4px;height:1px;background:#e9ecf0;"></div>
<svg class="a" style="left:779.31px;top:194.545px" width="5.98" height="3.91"><polygon points="0,0 5.98,0 2.99,3.91" fill="#a7adb4"/></svg>
<div class="t" style="left:798.10px;top:193.00px;font-size:8.80px;color:#444;font-weight:bold;transform:scaleX(0.9633);transform-origin:0 50%;">on off 1</div>
<div class="t" style="left:798.10px;top:212.75px;font-size:8.70px;color:#555;transform:scaleX(0.9516);transform-origin:0 50%;">Show layer <a>System on off</a></div>
<div class="t" style="left:809.20px;top:227.05px;font-size:8.70px;color:#555;transform:scaleX(0.9585);transform-origin:0 50%;">When the <u>user clicks</u> <a>on off 1</a></div>
<div class="a" style="left:773.6px;top:241.4px;width:232.4px;height:1px;background:#e9ecf0;"></div>
<div class="a" style="left:773.6px;top:242.4px;width:232.4px;height:18px;background:#f9fafc;"></div>
<div class="a" style="left:773.6px;top:260.4px;width:232.4px;height:1px;background:#e9ecf0;"></div>
<svg class="a" style="left:779.31px;top:249.245px" width="5.98" height="3.91"><polygon points="0,0 5.98,0 2.99,3.91" fill="#a7adb4"/></svg>
<div class="t" style="left:798.10px;top:247.70px;font-size:8.80px;color:#444;font-weight:bold;transform:scaleX(0.9384);transform-origin:0 50%;">recurring zoom mtgs 1</div>
<div class="t" style="left:798.10px;top:267.95px;font-size:8.70px;color:#555;transform:scaleX(0.9586);transform-origin:0 50%;">Show layer <a>Recurring zoom meetings</a></div>
<div class="t" style="left:809.20px;top:282.05px;font-size:8.70px;color:#555;transform:scaleX(0.9644);transform-origin:0 50%;">When the <u>user clicks</u> <a>recurring zoom mtgs 1</a></div>
<div class="a" style="left:773.6px;top:296.4px;width:232.4px;height:1px;background:#e9ecf0;"></div>
<div class="a" style="left:773.6px;top:297.4px;width:232.4px;height:18.4px;background:#f9fafc;"></div>
<div class="a" style="left:773.6px;top:315.8px;width:232.4px;height:1px;background:#e9ecf0;"></div>
<svg class="a" style="left:779.31px;top:304.445px" width="5.98" height="3.91"><polygon points="0,0 5.98,0 2.99,3.91" fill="#a7adb4"/></svg>
<div class="t" style="left:798.10px;top:302.90px;font-size:8.80px;color:#444;font-weight:bold;transform:scaleX(0.9116);transform-origin:0 50%;">second camera</div>
<div class="t" style="left:798.10px;top:322.65px;font-size:8.70px;color:#555;transform:scaleX(0.9571);transform-origin:0 50%;">Show layer <a>Arranging screens and student view</a></div>
<div class="t" style="left:809.20px;top:336.75px;font-size:8.70px;color:#555;transform:scaleX(0.9493);transform-origin:0 50%;">When the <u>user clicks</u> <a>second camera</a></div>
<div class="a" style="left:773.6px;top:351.2px;width:232.4px;height:1px;background:#e9ecf0;"></div>
<div class="t" style="left:798.10px;top:357.85px;font-size:8.70px;color:#555;transform:scaleX(0.9374);transform-origin:0 50%;">Show layer <a>Second camera</a></div>
<div class="t" style="left:809.20px;top:372.05px;font-size:8.70px;color:#555;transform:scaleX(0.9493);transform-origin:0 50%;">When the <u>user clicks</u> <a>second camera</a></div>
<div class="a" style="left:773.6px;top:386.2px;width:232.4px;height:21.8px;background:#eef2f7;"></div>
<div class="a" style="left:773.6px;top:386.2px;width:232.4px;height:1px;background:#e3e8ee;"></div>
<div class="a" style="left:773.6px;top:407.4px;width:232.4px;height:1px;background:#e3e8ee;"></div>
<div class="t" style="left:779.70px;top:392.90px;font-size:10.20px;color:#5a5a5a;transform:scaleX(0.9458);transform-origin:0 50%;">Player Triggers</div>
<svg class="a" style="left:990.4px;top:392.5px" width="7" height="10" viewBox="0 0 7 10"><path d="M0.4 0.5 H6.6 M0.4 9.5 H6.6" stroke="#a0a7af" stroke-width="0.9"/><path d="M1 1.6 H6 L3.5 4.4 Z M1 8.4 H6 L3.5 5.6 Z" fill="#a0a7af"/></svg>
<div class="a" style="left:773.6px;top:408.4px;width:232.4px;height:18.2px;background:#f9fafc;"></div>
<div class="a" style="left:773.6px;top:426.6px;width:232.4px;height:1px;background:#e9ecf0;"></div>
<svg class="a" style="left:779.31px;top:415.345px" width="5.98" height="3.91"><polygon points="0,0 5.98,0 2.99,3.91" fill="#a7adb4"/></svg>
<div class="t" style="left:798.10px;top:413.80px;font-size:8.80px;color:#444;font-weight:bold;transform:scaleX(0.9893);transform-origin:0 50%;">Next Button / Swipe Next</div>
<div class="t" style="left:798.10px;top:434.05px;font-size:8.70px;color:#555;transform:scaleX(0.9503);transform-origin:0 50%;">Jump to slide <a>14.1 In-class students on zoom?</a></div>
<div class="t" style="left:809.20px;top:447.85px;font-size:8.70px;color:#555;transform:scaleX(0.9500);transform-origin:0 50%;">When the <u>user clicks or swipes</u> <a>next</a></div>
<div class="t" style="left:819.60px;top:461.05px;font-size:8.70px;color:#555;transform:scaleX(0.9692);transform-origin:0 50%;">If <s>Watched</s> ≥ value 4</div>
<div class="a" style="left:773.6px;top:475px;width:232.4px;height:1px;background:#e9ecf0;"></div>
<div class="a" style="left:773.6px;top:476px;width:232.4px;height:19.4px;background:#f9fafc;"></div>
<div class="a" style="left:773.6px;top:495.4px;width:232.4px;height:1px;background:#e9ecf0;"></div>
<svg class="a" style="left:779.31px;top:483.545px" width="5.98" height="3.91"><polygon points="0,0 5.98,0 2.99,3.91" fill="#a7adb4"/></svg>
<div class="t" style="left:798.10px;top:482.00px;font-size:8.80px;color:#444;font-weight:bold;transform:scaleX(0.9380);transform-origin:0 50%;">Previous Button / Swipe Previous</div>
<div class="t" style="left:798.10px;top:502.15px;font-size:8.70px;color:#555;transform:scaleX(0.9475);transform-origin:0 50%;">Jump to scene <a>previous scene</a></div>
<div class="t" style="left:809.20px;top:516.15px;font-size:8.70px;color:#555;transform:scaleX(0.9513);transform-origin:0 50%;">When the <u>user clicks or swipes</u> <a>previous</a></div>
<div class="a" style="left:1006px;top:188px;width:14.5px;height:342px;background:#e1e6eb;"></div>
<div class="a" style="left:1006.6px;top:188.6px;width:13.4px;height:13.4px;background:#fff;"></div>
<svg class="a" style="left:1011.33px;top:193.33px" width="4.14" height="4.14"><polygon points="0,4.14 4.14,4.14 2.07,0" fill="#a4acb6"/></svg>
<div class="a" style="left:1006.6px;top:384.5px;width:13.4px;height:131.5px;background:#a9b2bd;"></div>
<div class="a" style="left:1011px;top:447.6px;width:4.4px;height:0.8px;background:#e8ecf1;"></div>
<div class="a" style="left:1011px;top:449.4px;width:4.4px;height:0.8px;background:#e8ecf1;"></div>
<div class="a" style="left:1011px;top:451.2px;width:4.4px;height:0.8px;background:#e8ecf1;"></div>
<div class="a" style="left:1006.6px;top:516.4px;width:13.4px;height:13.4px;background:#fff;"></div>
<svg class="a" style="left:1011.33px;top:520.93px" width="4.14" height="4.14"><polygon points="0,0 4.14,0 2.07,4.14" fill="#a4acb6"/></svg>
<div class="a" style="left:770px;top:530px;width:253px;height:1px;background:#e3e8ee;"></div>
<div class="t" style="left:785.60px;top:539.80px;font-size:11.00px;color:#5e5e5e;transform:scaleX(1.0078);transform-origin:0 50%;">Comments</div>
<div class="a" style="left:956px;top:539.4px;width:26.2px;height:11.6px;background:#1a7fd4;border-radius:1.5px;"></div>
<div class="t" style="left:969.10px;top:540.90px;font-size:8.80px;color:#fff;transform:translateX(-50%) scaleX(1.0222);">New</div>
<svg class="a" style="left:986.245px;top:542.41px" width="3.91" height="5.98"><polygon points="3.91,0 3.91,5.98 0,2.99" fill="#a7adb4"/></svg>
<svg class="a" style="left:998px;top:541px" width="9" height="8" viewBox="0 0 9 8"><rect x="2.4" y="0.6" width="6" height="4.6" fill="none" stroke="#9aa1a9" stroke-width="0.9"/><rect x="0.6" y="2.4" width="6" height="4.8" fill="#f2f5f8" stroke="#8d949c" stroke-width="0.9"/><rect x="0.6" y="2.2" width="6" height="1.3" fill="#8d949c"/></svg>
<div class="a" style="left:770px;top:559.6px;width:253px;height:1px;background:#e3e8ee;"></div>
<div class="t" style="left:785.60px;top:569.20px;font-size:11.00px;color:#5e5e5e;transform:scaleX(0.9890);transform-origin:0 50%;">Slide Properties</div>
<svg class="a" style="left:986.245px;top:571.61px" width="3.91" height="5.98"><polygon points="3.91,0 3.91,5.98 0,2.99" fill="#a7adb4"/></svg>
<svg class="a" style="left:998px;top:570.2px" width="9" height="8" viewBox="0 0 9 8"><rect x="2.4" y="0.6" width="6" height="4.6" fill="none" stroke="#9aa1a9" stroke-width="0.9"/><rect x="0.6" y="2.4" width="6" height="4.8" fill="#f2f5f8" stroke="#8d949c" stroke-width="0.9"/><rect x="0.6" y="2.2" width="6" height="1.3" fill="#8d949c"/></svg>
<!-- STATUS BAR -->
<div class="a" style="left:0px;top:589.6px;width:1023px;height:23.4px;background:#36333a;"></div>
<div class="t" style="left:7.00px;top:599.00px;font-size:8.20px;color:#b9b6bf;transform:scaleX(0.9812);transform-origin:0 50%;">Slide 4 of 4</div>
<div class="t" style="left:58.60px;top:598.40px;font-size:8.20px;color:#b9b6bf;transform:scaleX(0.9657);transform-origin:0 50%;">960 × 540</div>
<div class="t" style="left:105.40px;top:598.60px;font-size:8.20px;color:#b9b6bf;transform:scaleX(1.0108);transform-origin:0 50%;">"Minimal"</div>
<div class="a" style="left:823.1px;top:592.3px;width:17.6px;height:16.2px;background:#2b292f;border:1px dotted #4c4952;"></div>
<svg class="a" style="left:827.7px;top:596.5px" width="9" height="8" viewBox="0 0 9 8"><rect x="0" y="0" width="3.8" height="3.2" fill="#e8e6ec"/><rect x="5" y="0" width="3.8" height="3.2" fill="#e8e6ec"/><rect x="0" y="4.4" width="3.8" height="3.2" fill="#e8e6ec"/><rect x="5" y="4.4" width="3.8" height="3.2" fill="#e8e6ec"/></svg>
<svg class="a" style="left:845.2px;top:596.8px" width="9" height="8" viewBox="0 0 9 8"><rect x="0.5" y="0.5" width="7.6" height="6.4" fill="#d9d6de" stroke="#e8e6ec" stroke-width="0.8"/><rect x="3" y="0.5" width="3.6" height="2.6" fill="#36333a"/><rect x="1.6" y="4.6" width="5.4" height="0.8" fill="#36333a"/></svg>
<svg class="a" style="left:863px;top:596.6px" width="9" height="8.4" viewBox="0 0 9 8.4"><rect x="0" y="0" width="8.4" height="1" fill="#d9d6de"/><rect x="1.2" y="1.6" width="6" height="3.6" fill="none" stroke="#d9d6de" stroke-width="0.8"/><path d="M4.2 5.2 V7 M2.2 7.6 H6.2" stroke="#d9d6de" stroke-width="0.8"/></svg>
<div class="t" style="left:878.40px;top:597.70px;font-size:8.20px;color:#b9b6bf;transform:scaleX(0.8782);transform-origin:0 50%;">152%</div>
<div class="a" style="left:905px;top:600.8px;width:5.2px;height:1.5px;background:#b9b6bf;"></div>
<div class="a" style="left:913.6px;top:601px;width:70.2px;height:1px;background:#b9b6bf;"></div>
<div class="a" style="left:949.3px;top:598.4px;width:1.1px;height:6px;background:#b9b6bf;"></div>
<div class="a" style="left:953.9px;top:598.7px;width:5.6px;height:5.6px;background:#36333a;border:1px solid #e8e6ec;border-radius:50%;"></div>
<div class="a" style="left:987.8px;top:600.8px;width:5.8px;height:1.4px;background:#b9b6bf;"></div>
<div class="a" style="left:990px;top:598.6px;width:1.4px;height:5.8px;background:#b9b6bf;"></div>
<svg class="a" style="left:998.8px;top:596.4px" width="9.4" height="9.2" viewBox="0 0 10 9.6"><rect x="0.5" y="0.5" width="9" height="8.4" fill="none" stroke="#d9d6de" stroke-width="0.9"/><path d="M1.4 1.4 h2.4 l-2.4 2.4 Z M8.6 1.4 v2.4 l-2.4 -2.4 Z M1.4 8 v-2.4 l2.4 2.4 Z M8.6 8 h-2.4 l2.4 -2.4 Z" fill="#d9d6de"/><path d="M2 2 L8 7.4 M8 2 L2 7.4" stroke="#d9d6de" stroke-width="0.6"/></svg>
<div class="a" style="left:107px;top:611.6px;width:130px;height:1.4px;background:#d9dce0;"></div>
<div class="a" style="left:237px;top:611.6px;width:147px;height:1.4px;background:#2f2b45;"></div>
<div class="a" style="left:384px;top:611.4px;width:256px;height:1.6px;background:#56535b;"></div>
<div class="a" style="left:1px;top:129.7px;width:1021.4px;height:1.8px;background:#1a80d5;"></div>
</body>
</html>
